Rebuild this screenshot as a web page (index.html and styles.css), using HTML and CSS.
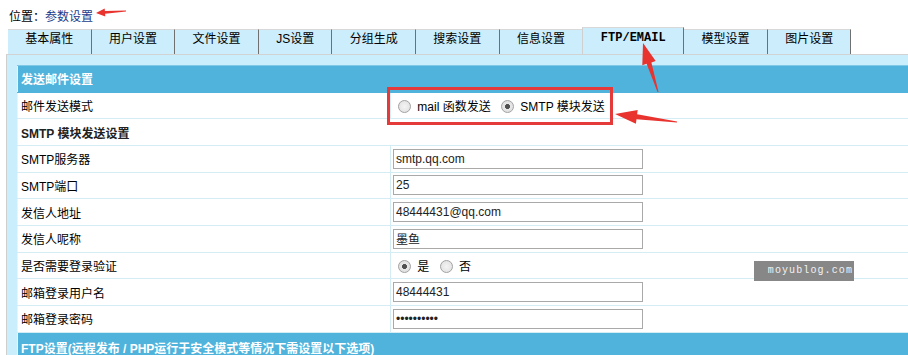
FILE: index.html
```html
<!DOCTYPE html>
<html lang="zh-CN">
<head>
  <meta charset="UTF-8" />
  <meta name="viewport" content="width=device-width, initial-scale=1.0" />
  <title>参数设置</title>
  <link rel="stylesheet" href="styles.css">
</head>
<body>
  <div class="loc">位置：<a href="#">参数设置</a></div>

  <ul class="tabs">
    <li>基本属性</li>
    <li>用户设置</li>
    <li>文件设置</li>
    <li>JS设置</li>
    <li>分组生成</li>
    <li>搜索设置</li>
    <li>信息设置</li>
    <li class="on">FTP/EMAIL</li>
    <li>模型设置</li>
    <li>图片设置</li>
  </ul>

  <div class="panel">
    <table class="form">
      <colgroup>
        <col class="col-label">
        <col>
      </colgroup>
      <tr><th colspan="2">发送邮件设置</th></tr>
      <tr>
        <td>邮件发送模式</td>
        <td class="val">
          <label><input type="radio" name="mailmode"> mail 函数发送</label>
          <label><input type="radio" name="mailmode" checked> SMTP 模块发送</label>
        </td>
      </tr>
      <tr><td colspan="2" class="sub">SMTP 模块发送设置</td></tr>
      <tr>
        <td>SMTP服务器</td>
        <td class="val"><input type="text" class="txt" value="smtp.qq.com"></td>
      </tr>
      <tr>
        <td>SMTP端口</td>
        <td class="val"><input type="text" class="txt" value="25"></td>
      </tr>
      <tr>
        <td>发信人地址</td>
        <td class="val"><input type="text" class="txt" value="48444431@qq.com"></td>
      </tr>
      <tr>
        <td>发信人呢称</td>
        <td class="val"><input type="text" class="txt" value="墨鱼"></td>
      </tr>
      <tr>
        <td>是否需要登录验证</td>
        <td class="val">
          <label><input type="radio" name="auth" checked> 是</label>
          <label><input type="radio" name="auth"> 否</label>
        </td>
      </tr>
      <tr>
        <td>邮箱登录用户名</td>
        <td class="val"><input type="text" class="txt" value="48444431"></td>
      </tr>
      <tr>
        <td>邮箱登录密码</td>
        <td class="val"><input type="password" class="txt" value="xxxxxxxxxx"></td>
      </tr>
      <tr><th colspan="2" class="last">FTP设置(远程发布 / PHP运行于安全模式等情况下需设置以下选项)</th></tr>
    </table>
  </div>

  <!-- annotations drawn over the screenshot -->
  <div class="mark-box"></div>
  <div class="watermark">moyublog.com</div>
  <svg class="arrows" width="908" height="355" viewBox="0 0 908 355">
    <polygon points="96,13 104.7,8.4 104.9,11.1 126,10.6 126,11.4 105.1,13.7 105.3,16.4" />
    <polygon points="643,43 655.7,61 651.4,62.4 658.5,92 657.5,92 646.6,63.8 642.3,65.2" />
    <polygon points="615,114 637.7,109.9 637.1,114.3 677,121.5 677,122.5 636.5,119.3 635.9,123.7" />
  </svg>
</body>
</html>
```

FILE: styles.css
```css
html, body {
  overflow: hidden;
}

body {
  margin: 0;
  font-family: 'Liberation Sans', 'Noto Sans CJK SC', sans-serif;
  font-size: 12px;
  color: #000;
  background-color: #fff;
  position: relative;
  height: 355px;
}

.loc {
  padding: 10px 9px 0;
  line-height: 14px;
}

.loc a {
  color: #1a3c8c;
  text-decoration: none;
}

.tabs {
  list-style: none;
  margin: 3px 0 0 8px;
  padding: 0;
  height: 27px;
  display: flex;
  align-items: flex-end;
  white-space: nowrap;
}

.tabs li {
  background-color: #ccedfb;
  border-top: 1px solid #d8d8d8;
  border-right: 1px solid #707070;
  padding: 0 17.3px 6px;
  line-height: 18px;
  flex-shrink: 0;
}

.tabs li.on {
  margin-left: -1px;
  padding: 1px 17.6px 7px;
  border-left: 1px solid #cfcfcf;
  font-family: 'Liberation Mono', monospace;
  font-weight: bold;
  position: relative;
}

.panel {
  margin-left: 6px;
  width: 891px;
  background-color: #caeefb;
  border-top: 1px solid #d2d2d2;
  border-left: 1px solid #cfcfcf;
  padding: 10px 0 0 10px;
}

.form {
  width: 893px;
  table-layout: fixed;
  border-collapse: collapse;
  background-color: #fff;
  border: 1px solid #e4f5fb;
  border-top-color: #7fc8e6;
  border-right: none;
}

.col-label {
  width: 373px;
}

.form th,
.form td {
  height: 25.67px;
  padding: 0 3px;
  text-align: left;
  vertical-align: middle;
  border-bottom: 1px solid #d4edf5;
  white-space: nowrap;
}

.form td:first-child {
  border-right: 1px solid #d4edf5;
}

.form td.sub {
  font-weight: bold;
  color: #222;
}

.form th {
  background-color: #4fb3dc;
  color: #fff;
  font-weight: bold;
  border-bottom-color: #4fb3dc;
}

.form th.last {
  vertical-align: top;
  padding-top: 6px;
  height: 20px;
}

.form td.val {
  padding-left: 2px;
}

.val label {
  margin-right: 2px;
}

input[type="radio"] {
  -webkit-appearance: none;
  appearance: none;
  width: 13px;
  height: 13px;
  margin: 0 3px 0 5px;
  border: 1px solid #a3a3a3;
  border-radius: 50%;
  background: radial-gradient(circle, #f4f4f4 0%, #dedede 100%);
  vertical-align: middle;
  position: relative;
  top: -1px;
}

input[type="radio"]:checked {
  background: radial-gradient(circle, #505050 0, #505050 2.2px, #e8e8e8 2.8px, #dadada 100%);
}

.txt {
  box-sizing: border-box;
  width: 250px;
  height: 20px;
  margin: 0;
  padding: 0 2px;
  border: 1px solid #a9a9a9;
  font-family: 'Liberation Sans', 'Noto Sans CJK SC', sans-serif;
  font-size: 12px;
  color: #222;
  vertical-align: middle;
}

.mark-box {
  position: absolute;
  left: 387px;
  top: 87px;
  width: 220px;
  height: 32px;
  border: 3px solid #e53a3a;
}

.watermark {
  position: absolute;
  left: 754px;
  top: 261px;
  width: 100px;
  height: 20px;
  line-height: 20px;
  background-color: #878787;
  color: #f2f2f2;
  font-family: 'Liberation Mono', monospace;
  font-size: 10px;
  letter-spacing: 1.1px;
  text-align: right;
  box-sizing: border-box;
  padding-right: 1px;
}

.arrows {
  position: absolute;
  left: 0;
  top: 0;
  pointer-events: none;
}

.arrows polygon {
  fill: #e8332f;
}
```
